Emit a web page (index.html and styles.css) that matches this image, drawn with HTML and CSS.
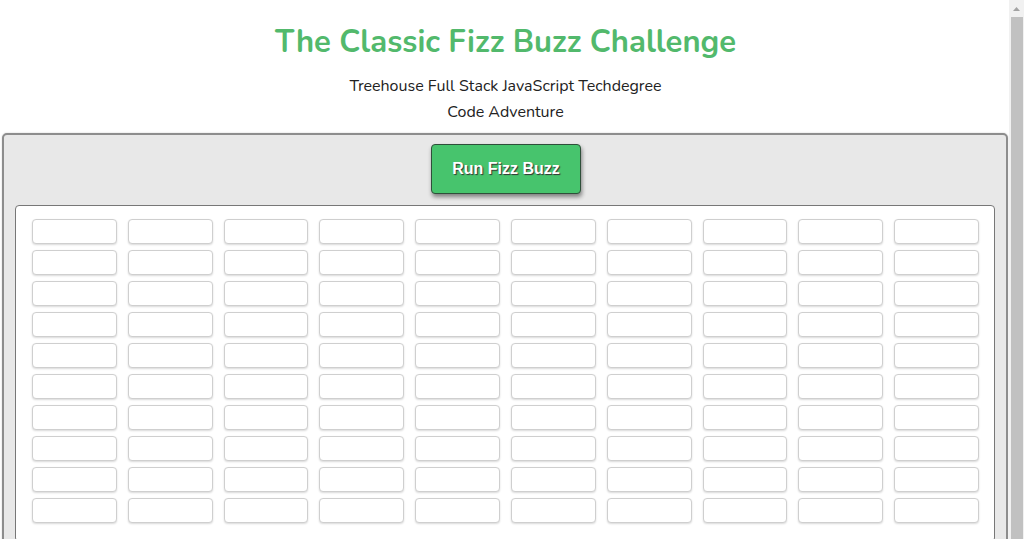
FILE: index.html
```html
<!DOCTYPE html>
<html>
<head>
<meta charset="utf-8">
<title>Fizz Buzz</title>
<link rel="stylesheet" href="styles.css">
</head>
<body>
<div class="page">
  <header class="header">
    <h1 class="title">The Classic Fizz Buzz Challenge</h1>
    <p class="sub">Treehouse Full Stack JavaScript Techdegree</p>
    <p class="sub">Code Adventure</p>
  </header>
  <main class="panel">
    <button class="run">Run Fizz Buzz</button>
    <div class="board" id="board"></div>
  </main>
</div>
<div class="scrollbar" aria-hidden="true">
  <div class="sb-up"><svg width="15" height="17" viewBox="0 0 15 17"><path d="M4 11 L7.5 7 L11 11 Z" fill="#a3a3a3"/></svg></div>
  <div class="sb-thumb"></div>
</div>
<script src="script.js"></script>
</body>
</html>
```
FILE: script.js
```js
var b = document.getElementById('board');
for (var i = 0; i < 100; i++) {
  var d = document.createElement('div');
  d.className = 'cell';
  b.appendChild(d);
}
```
FILE: styles.css
```css
html, body { margin: 0; padding: 0; background: #fff; }
body {
  font-family: "Nunito", "Lato", "Noto Sans", sans-serif;
  color: #222;
  display: flex;
  align-items: flex-start;
}
.page { flex: 1; min-width: 0; }
.scrollbar {
  width: 15px;
  height: 100vh;
  flex: none;
  background: #f1f1f1;
  display: flex;
  flex-direction: column;
  position: sticky;
  top: 0;
}
.sb-up { height: 17px; flex: none; }
.sb-up svg { display: block; }
.sb-thumb { flex: 1; background: #c1c1c1; margin: 0 1px 0 2px; }
.header { text-align: center; padding-top: 22px; padding-left: 2px; }
.title {
  margin: 0;
  font-size: 31px;
  line-height: 40px;
  font-weight: 700;
  color: #52b96c;
}
.sub { margin: 0; font-size: 16px; line-height: 26px; }
.header .title + .sub { margin-top: 11px; }
.panel {
  margin: 8px 1px 0 2px;
  background: #e8e8e8;
  border: 2px solid #8d8d8d;
  border-radius: 5px;
  box-shadow: 0 0 2px rgba(0,0,0,0.2);
  padding: 9px 11px 12px;
  display: flex;
  flex-direction: column;
  align-items: center;
}
.run {
  width: 150px;
  height: 50px;
  margin-left: 2px;
  background: #47c46d;
  border: 1px solid #2f4f3a;
  border-radius: 4px;
  box-shadow: 1px 3px 4px rgba(0,0,0,0.45);
  color: #fff;
  font-family: "Liberation Sans", Arial, sans-serif;
  font-weight: 700;
  font-size: 16px;
  text-shadow: 1px 1px 1px #333;
  cursor: pointer;
}
.board {
  align-self: stretch;
  margin-top: 11px;
  background: #fff;
  border: 1px solid #777;
  border-radius: 4px;
  padding: 13px 15px 18px 16px;
  display: grid;
  grid-template-columns: repeat(10, 1fr);
  column-gap: 11px;
  row-gap: 6px;
}
.cell {
  height: 23px;
  border: 1px solid #cfcfcf;
  border-radius: 4px;
  box-shadow: 0 1px 2px rgba(0,0,0,0.15);
  background: #fff;
}
```
